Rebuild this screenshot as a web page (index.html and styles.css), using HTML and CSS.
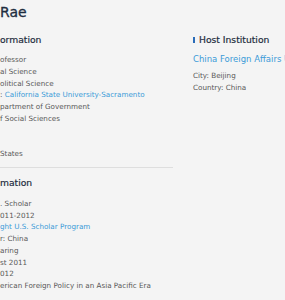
FILE: index.html
```html
<!DOCTYPE html>
<html lang="en">
<head>
<meta charset="utf-8">
<title>Scholar profile</title>
<link rel="stylesheet" href="styles.css">
</head>
<body>
<div class="page">
  <h1 class="name">Rae</h1>
  <div class="cols">
    <div class="main">
      <section class="block">
        <h2 class="block-title">ormation</h2>
        <ul class="rows">
          <li>ofessor</li>
          <li>al Science</li>
          <li>olitical Science</li>
          <li>: <a class="link" href="#">California State University-Sacramento</a></li>
          <li>partment of Government</li>
          <li>f Social Sciences</li>
          <li>&nbsp;</li>
          <li>&nbsp;</li>
          <li>States</li>
        </ul>
      </section>
      <section class="block">
        <h2 class="block-title">mation</h2>
        <ul class="rows">
          <li>. Scholar</li>
          <li>011-2012</li>
          <li><a class="link" href="#">ght U.S. Scholar Program</a></li>
          <li>r: China</li>
          <li>aring</li>
          <li>st 2011</li>
          <li>012</li>
          <li>erican Foreign Policy in an Asia Pacific Era</li>
        </ul>
      </section>
    </div>
    <aside class="side">
      <h2 class="side-title">Host Institution</h2>
      <a class="side-link" href="#">China Foreign Affairs U</a>
      <ul class="side-rows">
        <li>City: Beijing</li>
        <li>Country: China</li>
      </ul>
    </aside>
  </div>
</div>
</body>
</html>
```
FILE: styles.css
```css
html, body {
  margin: 0;
  padding: 0;
}
body {
  background: #f4f4f4;
  font-family: "DejaVu Sans", "Liberation Sans", sans-serif;
  color: #585858;
  overflow: hidden;
}
.page {
  padding-top: 2px;
}
.name {
  margin: 0;
  font-size: 14px;
  line-height: 20px;
  font-weight: normal;
  color: #1e2d40;
  -webkit-text-stroke: 0.3px #1e2d40;
}
.cols {
  display: grid;
  grid-template-columns: 173px 1fr;
  column-gap: 20px;
  margin-top: 11px;
}
.block {
  border-bottom: 1px solid #dedede;
  padding-bottom: 7px;
}
.block + .block {
  padding-top: 8px;
  padding-bottom: 8px;
}
.block-title {
  margin: 0 0 7px;
  font-size: 9.2px;
  line-height: 14px;
  font-weight: normal;
  color: #1e2d40;
  -webkit-text-stroke: 0.2px #1e2d40;
  white-space: nowrap;
}
.block + .block .block-title {
  margin-bottom: 8px;
}
.rows, .side-rows {
  list-style: none;
  margin: 0;
  padding: 0;
}
.rows li, .side-rows li {
  font-size: 7.2px;
  line-height: 11.75px;
  white-space: nowrap;
}
.link {
  color: #3b9bd8;
  text-decoration: none;
}
.side {
  min-width: 0;
}
.side-title {
  margin: 0;
  font-size: 9.2px;
  line-height: 14px;
  font-weight: normal;
  color: #1e2d40;
  -webkit-text-stroke: 0.2px #1e2d40;
  display: flex;
  align-items: center;
  gap: 4px;
  white-space: nowrap;
}
.side-title::before {
  content: "";
  width: 2px;
  height: 6px;
  background: #2a6cb9;
}
.side-link {
  display: block;
  margin-top: 6px;
  font-size: 8.5px;
  line-height: 12px;
  color: #3b9bd8;
  text-decoration: none;
  white-space: nowrap;
}
.side-rows {
  margin-top: 5px;
}
```
